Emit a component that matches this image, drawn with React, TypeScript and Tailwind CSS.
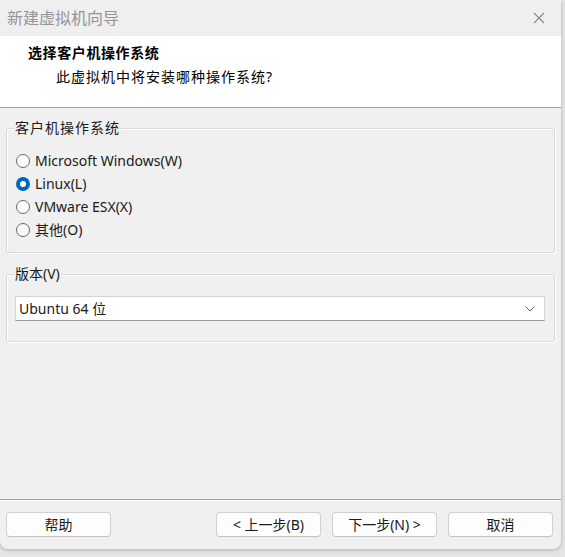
import React from "react";

const font = { fontFamily: '"Noto Sans", "Noto Sans CJK SC", sans-serif' };

function Radio({ checked, label }: { checked?: boolean; label: string }) {
  return (
    <div className="flex h-[23px] items-center">
      {checked ? (
        <span className="flex h-[14px] w-[14px] items-center justify-center rounded-full bg-[#0067c0]">
          <span className="h-[6px] w-[6px] rounded-full bg-white" />
        </span>
      ) : (
        <span className="h-[14px] w-[14px] rounded-full border border-[#6a6a6a] bg-[#fafafa]" />
      )}
      <span className="ml-[5px] text-[14px] leading-none text-[#1a1a1a]">{label}</span>
    </div>
  );
}

function Btn({ children }: { children: React.ReactNode }) {
  return (
    <button className="flex h-[25px] w-[105px] items-center justify-center rounded-[4px] border border-[#d0d0d0] border-b-[#c2c2c2] bg-[#fdfdfd] text-[14px] leading-none text-[#1a1a1a]">
      {children}
    </button>
  );
}

export default function App() {
  return (
    <div className="h-[557px] w-[565px] overflow-hidden bg-[#e6e6e6]" style={font}>
      <div className="flex h-[549px] w-[561px] flex-col overflow-hidden rounded-b-[8px] bg-[#f0f0f0] shadow-[0_1px_4px_rgba(0,0,0,0.25)]">
        {/* title bar */}
        <div className="flex h-[36px] shrink-0 items-center justify-between bg-[#efefef] pl-[7px] pr-[13px]">
          <span className="text-[16px] leading-none text-[#959595]">新建虚拟机向导</span>
          <svg width="12" height="12" viewBox="0 0 12 12" className="mr-[3px]">
            <path d="M1 1 L11 11 M11 1 L1 11" stroke="#8a8a8a" strokeWidth="1.1" />
          </svg>
        </div>
        {/* header */}
        <div className="flex h-[72px] shrink-0 flex-col border-b border-[#a0a0a0] bg-white">
          <div className="ml-[28px] mt-[8px] text-[14px] font-bold leading-[18px] tracking-[0.6px] text-black">
            选择客户机操作系统
          </div>
          <div className="ml-[56px] mt-[6px] text-[14px] leading-[18px] tracking-[1px] text-black">
            此虚拟机中将安装哪种操作系统?
          </div>
        </div>
        {/* body */}
        <div className="flex flex-1 flex-col px-[6px]">
          <div className="relative mt-[20px] h-[125px] w-[549px] rounded-[2px] border border-[#d9d9d9] shadow-[inset_1px_1px_0_#ffffff,1px_1px_0_#ffffff]">
            <span className="absolute -top-[11px] left-[7px] bg-[#f0f0f0] px-[1px] text-[14px] leading-[20px] tracking-[1px] text-[#1a1a1a]">
              客户机操作系统
            </span>
            <div className="ml-[9px] mt-[20px] flex flex-col">
              <Radio label="Microsoft Windows(W)" />
              <Radio checked label="Linux(L)" />
              <Radio label="VMware ESX(X)" />
              <Radio label="其他(O)" />
            </div>
          </div>
          <div className="relative mt-[21px] h-[68px] w-[549px] rounded-[2px] border border-[#d9d9d9] shadow-[inset_1px_1px_0_#ffffff,1px_1px_0_#ffffff]">
            <span className="absolute -top-[11px] left-[7px] bg-[#f0f0f0] px-[1px] text-[14px] leading-[20px] text-[#1a1a1a]">
              版本(V)
            </span>
            <div className="ml-[8px] mt-[21px] flex h-[25px] w-[530px] items-center justify-between border border-[#d4d4d4] border-b-[#9a9a9a] bg-white pl-[3px] pr-[9px]">
              <span className="text-[14px] leading-none text-[#1a1a1a]">Ubuntu 64 位</span>
              <svg width="10" height="6" viewBox="0 0 10 6">
                <path d="M0.5 0.5 L5 5 L9.5 0.5" stroke="#666" strokeWidth="1" fill="none" />
              </svg>
            </div>
          </div>
        </div>
        {/* footer */}
        <div className="flex h-[50px] shrink-0 items-start border-t border-[#a0a0a0] pl-[6px] pr-[8px] pt-[12px] shadow-[inset_0_1px_0_#ffffff]">
          <Btn>帮助</Btn>
          <div className="ml-auto flex gap-[11px]">
            <Btn>&lt; 上一步(B)</Btn>
            <Btn>下一步(N) &gt;</Btn>
          </div>
          <div className="ml-[11px]">
            <Btn>取消</Btn>
          </div>
        </div>
      </div>
    </div>
  );
}
